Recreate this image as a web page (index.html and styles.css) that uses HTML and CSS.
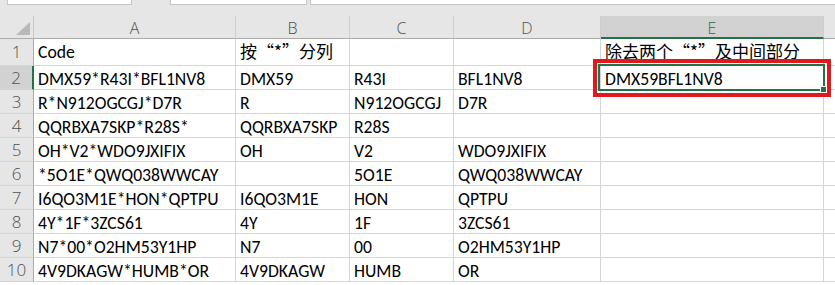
FILE: index.html
```html
<!DOCTYPE html>
<html lang="zh-CN">
<head>
    <meta charset="UTF-8">
    <title>Sheet</title>
    <link rel="stylesheet" href="styles.css">
</head>
<body>
    <div class="topbar">
        <div class="field field-name"></div>
        <div class="field field-fx"></div>
        <div class="field field-formula"></div>
    </div>

    <div class="sheet">
        <!-- column headers -->
        <div class="corner"><span class="corner-tri"></span></div>
        <div class="colhead">A</div>
        <div class="colhead">B</div>
        <div class="colhead">C</div>
        <div class="colhead">D</div>
        <div class="colhead active">E</div>
        <div class="colhead last"></div>

        <!-- row 1 -->
        <div class="rowhead tall">1</div>
        <div class="cell tall">Code</div>
        <div class="cell tall cjk">按“*”分列</div>
        <div class="cell tall"></div>
        <div class="cell tall"></div>
        <div class="cell tall cjk">除去两个“*”及中间部分</div>
        <div class="cell tall last"></div>

        <div class="rowhead active">2</div>
        <div class="cell">DMX59*R43I*BFL1NV8</div>
        <div class="cell">DMX59</div>
        <div class="cell">R43I</div>
        <div class="cell">BFL1NV8</div>
        <div class="cell selected">DMX59BFL1NV8<span class="sel-box"><span class="handle"></span></span><span class="mark-box"></span></div>
        <div class="cell last"></div>

        <div class="rowhead">3</div>
        <div class="cell">R*N912OGCGJ*D7R</div>
        <div class="cell">R</div>
        <div class="cell">N912OGCGJ</div>
        <div class="cell">D7R</div>
        <div class="cell"></div>
        <div class="cell last"></div>

        <div class="rowhead">4</div>
        <div class="cell">QQRBXA7SKP*R28S*</div>
        <div class="cell">QQRBXA7SKP</div>
        <div class="cell">R28S</div>
        <div class="cell"></div>
        <div class="cell"></div>
        <div class="cell last"></div>

        <div class="rowhead">5</div>
        <div class="cell">OH*V2*WDO9JXIFIX</div>
        <div class="cell">OH</div>
        <div class="cell">V2</div>
        <div class="cell">WDO9JXIFIX</div>
        <div class="cell"></div>
        <div class="cell last"></div>

        <div class="rowhead">6</div>
        <div class="cell">*5O1E*QWQ038WWCAY</div>
        <div class="cell"></div>
        <div class="cell">5O1E</div>
        <div class="cell">QWQ038WWCAY</div>
        <div class="cell"></div>
        <div class="cell last"></div>

        <div class="rowhead">7</div>
        <div class="cell">I6QO3M1E*HON*QPTPU</div>
        <div class="cell">I6QO3M1E</div>
        <div class="cell">HON</div>
        <div class="cell">QPTPU</div>
        <div class="cell"></div>
        <div class="cell last"></div>

        <div class="rowhead">8</div>
        <div class="cell">4Y*1F*3ZCS61</div>
        <div class="cell">4Y</div>
        <div class="cell">1F</div>
        <div class="cell">3ZCS61</div>
        <div class="cell"></div>
        <div class="cell last"></div>

        <div class="rowhead">9</div>
        <div class="cell">N7*00*O2HM53Y1HP</div>
        <div class="cell">N7</div>
        <div class="cell">00</div>
        <div class="cell">O2HM53Y1HP</div>
        <div class="cell"></div>
        <div class="cell last"></div>

        <div class="rowhead">10</div>
        <div class="cell">4V9DKAGW*HUMB*OR</div>
        <div class="cell">4V9DKAGW</div>
        <div class="cell">HUMB</div>
        <div class="cell">OR</div>
        <div class="cell"></div>
        <div class="cell last"></div>
    </div>
</body>
</html>
```

FILE: styles.css
```css
html, body {
    margin: 0;
    padding: 0;
    background: #fff;
    overflow: hidden;
}
body {
    width: 835px;
    height: 285px;
    font-family: Carlito, Calibri, "Liberation Sans Narrow", Roboto, "Noto Sans CJK SC", sans-serif;
}

/* formula bar leftovers */
.topbar {
    display: flex;
    height: 16px;
    background: #e6e6e6;
    align-items: flex-start;
}
.field {
    height: 4px;
    background: #fff;
    border: 1px solid #c6c6c6;
    border-top: none;
}
.field-name { margin-left: 7px; width: 123px; }
.field-fx { margin-left: 38px; width: 135px; }
.field-formula { margin-left: 3px; flex: 1; border-right: none; }

.sheet {
    display: grid;
    grid-template-columns: 34px 202px 114px 104px 147px 223px 1fr;
    grid-template-rows: 23px 27px repeat(9, 24px);
}

.corner, .colhead, .rowhead {
    background: #e6e6e6;
    color: #505050;
    font-family: "Open Sans", "Liberation Sans", sans-serif;
    font-weight: 300;
    box-sizing: border-box;
}
.corner {
    position: relative;
    border-right: 1px solid #c8c8c8;
    border-bottom: 1px solid #ababab;
}
.corner-tri {
    position: absolute;
    right: 3px;
    bottom: 3px;
    width: 0;
    height: 0;
    border-left: 14px solid transparent;
    border-bottom: 13px solid #b9b9b9;
}
.colhead {
    display: flex;
    justify-content: center;
    align-items: center;
    font-size: 16px;
    border-right: 1px solid #cfcfcf;
    border-bottom: 1px solid #ababab;
    padding-top: 2px;
}
.colhead.active {
    background: #d2d2d2;
    color: #217346;
    border-bottom: 2px solid #217346;
}
.colhead.last { border-right: none; }

.rowhead {
    display: flex;
    justify-content: center;
    align-items: flex-end;
    font-size: 17px;
    line-height: 22px;
    border-right: 1px solid #ababab;
    border-bottom: 1px solid #d4d4d4;
}
.rowhead.tall { padding-bottom: 2px; }
.rowhead.active {
    background: #d2d2d2;
    border-right: 2px solid #217346;
}

.cell {
    display: flex;
    align-items: flex-end;
    box-sizing: border-box;
    padding: 0 0 0 4px;
    font-size: 17.7px;
    line-height: 20px;
    color: #000;
    white-space: nowrap;
    border-right: 1px solid #d4d4d4;
    border-bottom: 1px solid #d4d4d4;
}
.cell.tall { padding-bottom: 3px; }
.cell.last { border-right: none; }
.cjk {
    font-family: "Noto Sans CJK SC", sans-serif;
    font-size: 17px;
    line-height: 22px;
}

/* active cell E2 */
.selected { position: relative; }
.sel-box {
    position: absolute;
    top: -2px;
    right: -2px;
    bottom: -2px;
    left: -3px;
    border: 2px solid #217346;
}
.handle {
    position: absolute;
    right: -4px;
    bottom: -4px;
    width: 5px;
    height: 5px;
    background: #217346;
    border: 1px solid #fff;
}
.mark-box {
    position: absolute;
    top: -7px;
    right: -8px;
    bottom: -8px;
    left: -8px;
    border: 4px solid #e2181f;
}
```
